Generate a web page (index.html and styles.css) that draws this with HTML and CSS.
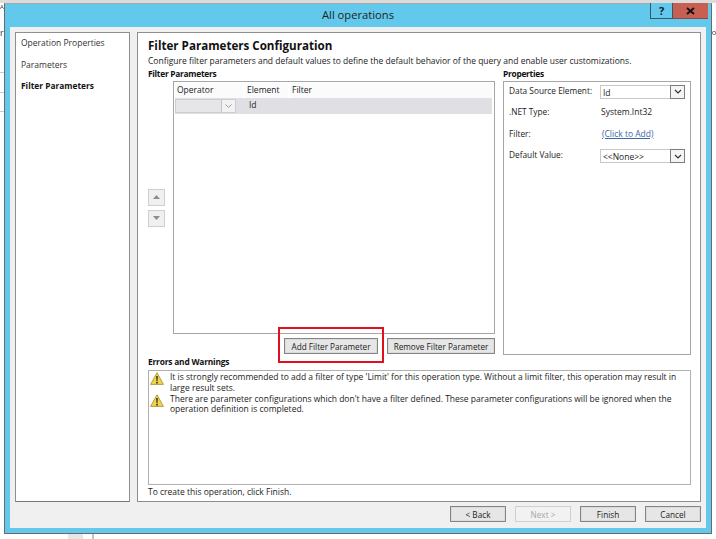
FILE: index.html
```html
<!DOCTYPE html>
<html lang="en">
<head>
<meta charset="utf-8">
<title>All operations</title>
<link rel="stylesheet" href="styles.css">
</head>
<body>
<div class="backdrop">
  <span class="bg-a">A</span><span class="bg-r">r</span><span class="bg-o">o</span>
  <span class="bg-line bg-l1"></span><span class="bg-line bg-l2"></span><span class="bg-line bg-l3"></span>
  <span class="bg-stub"></span>
</div>
<div class="window">
  <header class="titlebar">
    <span class="title">All operations</span>
    <div class="controls">
      <span class="ctl-help">?</span>
      <span class="ctl-close"><svg width="9" height="8" viewBox="0 0 9 8"><path d="M1 1l7 6M8 1L1 7" stroke="#111" stroke-width="1.9" fill="none"/></svg></span>
    </div>
  </header>
  <div class="client">
    <div class="panels">
      <nav class="nav">
        <div class="nav-item">Operation Properties</div>
        <div class="nav-item">Parameters</div>
        <div class="nav-item active">Filter Parameters</div>
      </nav>
      <main class="content">
        <h1 class="heading">Filter Parameters Configuration</h1>
        <p class="desc">Configure filter parameters and default values to define the default behavior of the query and enable user customizations.</p>
        <div class="columns">
          <section class="params">
            <div class="label">Filter Parameters</div>
            <div class="params-body">
              <div class="arrows">
                <span class="arrow"><svg width="7" height="4" viewBox="0 0 7 4"><path d="M3.5 0L7 4H0z" fill="#8e8e8e"/></svg></span>
                <span class="arrow"><svg width="7" height="4" viewBox="0 0 7 4"><path d="M0 0h7L3.5 4z" fill="#8e8e8e"/></svg></span>
              </div>
              <div class="grid">
                <div class="grid-head">
                  <span class="col-op">Operator</span><span class="col-el">Element</span><span class="col-fi">Filter</span>
                </div>
                <div class="grid-row">
                  <span class="mini-combo"><span class="mini-arrow"><svg width="7" height="4" viewBox="0 0 7 4"><path d="M.5.5l3 3 3-3" stroke="#9a9a9a" fill="none"/></svg></span></span>
                  <span class="row-id">Id</span>
                </div>
              </div>
            </div>
            <div class="param-buttons">
              <button class="btn btn-add">Add Filter Parameter</button>
              <button class="btn btn-remove">Remove Filter Parameter</button>
            </div>
          </section>
          <section class="props">
            <div class="label">Properties</div>
            <div class="props-box">
              <div class="prop">
                <span class="prop-name">Data Source Element:</span>
                <span class="combo"><span class="combo-text">Id</span><span class="combo-arrow"><svg width="8" height="5" viewBox="0 0 8 5"><path d="M1 1l3 3 3-3" stroke="#333" stroke-width="1.2" fill="none"/></svg></span></span>
              </div>
              <div class="prop">
                <span class="prop-name">.NET Type:</span>
                <span class="prop-value">System.Int32</span>
              </div>
              <div class="prop">
                <span class="prop-name">Filter:</span>
                <a class="prop-link" href="#">(Click to Add)</a>
              </div>
              <div class="prop">
                <span class="prop-name">Default Value:</span>
                <span class="combo"><span class="combo-text">&lt;&lt;None&gt;&gt;</span><span class="combo-arrow"><svg width="8" height="5" viewBox="0 0 8 5"><path d="M1 1l3 3 3-3" stroke="#333" stroke-width="1.2" fill="none"/></svg></span></span>
              </div>
            </div>
          </section>
        </div>
        <div class="label errors-label">Errors and Warnings</div>
        <div class="errors">
          <div class="error">
            <svg class="warn" width="14" height="13" viewBox="0 0 14 13"><path d="M7 .7L13.4 12.4H.6z" fill="#f3d544" stroke="#9a8a3a" stroke-width=".8"/><path d="M6.2 4h1.6l-.3 5h-1zM6.2 9.8h1.6v1.6H6.2z" fill="#2a2a2a"/></svg>
            <span>It is strongly recommended to add a filter of type 'Limit' for this operation type. Without a limit filter, this operation may result in large result sets.</span>
          </div>
          <div class="error">
            <svg class="warn" width="14" height="13" viewBox="0 0 14 13"><path d="M7 .7L13.4 12.4H.6z" fill="#f3d544" stroke="#9a8a3a" stroke-width=".8"/><path d="M6.2 4h1.6l-.3 5h-1zM6.2 9.8h1.6v1.6H6.2z" fill="#2a2a2a"/></svg>
            <span>There are parameter configurations which don't have a filter defined. These parameter configurations will be ignored when the operation definition is completed.</span>
          </div>
        </div>
        <p class="hint">To create this operation, click Finish.</p>
      </main>
    </div>
    <footer class="footer">
      <button class="btn btn-foot">&lt; Back</button>
      <button class="btn btn-foot btn-disabled">Next &gt;</button>
      <button class="btn btn-foot">Finish</button>
      <button class="btn btn-foot">Cancel</button>
    </footer>
  </div>
</div>
<div class="highlight"></div>
</body>
</html>
```
FILE: styles.css
```css
* { box-sizing: border-box; }
html, body { margin: 0; padding: 0; }
body {
  position: relative;
  width: 716px;
  height: 539px;
  overflow: hidden;
  background: #fff;
  padding: 3px 0 0 4px;
  font-family: "Open Sans", "Liberation Sans", sans-serif;
  font-size: 8.5px;
  line-height: 11px;
  color: #1c1c1c;
  filter: blur(.35px);
}
.backdrop { position: absolute; inset: 0; }
.backdrop > span { position: absolute; }
.bg-a { left: 0; top: 3px; font-size: 6px; line-height: 8px; color: #333; }
.bg-r { left: 0; top: 27px; font-size: 9px; color: #333; }
.bg-o { left: 712px; top: 27px; font-size: 7px; color: #333; }
.backdrop::before { content: ""; position: absolute; left: 0; top: 0; width: 716px; height: 3px; background: #dcdcdc; }
.bg-line { left: 0; width: 4px; height: 1px; background: #c8c8c8; }
.bg-l1 { top: 72px; }
.bg-l2 { top: 92px; }
.bg-l3 { top: 111px; }
.bg-stub { left: 68px; top: 534px; width: 26px; height: 5px; border-left: 15px solid #e6e6e6; border-right: 2px solid #c4c4c4; }

.window {
  position: relative;
  width: 708px;
  height: 531px;
  background: #63c9ec;
  border: 1px solid #6a6a6a;
  border-top-color: #a8a8a8;
}
.titlebar {
  position: relative;
  height: 23px;
  display: flex;
  align-items: center;
  justify-content: center;
  padding-bottom: 2px;
}
.title { font-size: 11.2px; color: #222; }
.controls { position: absolute; top: -1px; right: 3px; display: flex; }
.ctl-help, .ctl-close { display: flex; align-items: center; justify-content: center; height: 16px; font-weight: 700; }
.ctl-help { width: 23px; font-size: 11px; color: #123; background: #63c9ec; border: 1px solid #36596a; border-top: 0; }
.ctl-close { width: 35px; background: #c75f52; border-bottom: 1px solid #8a4a42; }

.client {
  margin: 0 5px;
  height: 501px;
  background: #f0f0f0;
  padding: 5px 5px 0;
  display: flex;
  flex-direction: column;
}
.panels { display: flex; gap: 7px; height: 470px; }
.nav {
  width: 115px;
  background: #fff;
  border: 1px solid #8f8f8f;
  border-bottom-color: #777;
  padding: 4px 5px 0;
}
.nav-item { height: 21.5px; line-height: 11px; color: #333; }
.nav-item.active { font-weight: 700; color: #111; font-size: 8.35px; }
.content {
  flex: 1;
  background: #fff;
  border: 1px solid #8f8f8f;
  padding: 5px 9px 0 10px;
  display: flex;
  flex-direction: column;
}
.heading { margin: 0; font-size: 11.6px; line-height: 16px; font-weight: 700; color: #111; }
.desc { margin: 1px 0 0; height: 12px; line-height: 12px; white-space: nowrap; }
.label { font-weight: 700; line-height: 12px; height: 13px; color: #111; font-size: 8.4px; letter-spacing: -.28px; }
.columns { display: flex; gap: 8px; margin-top: 1px; }
.params { width: 347px; }
.params-body { display: flex; height: 253px; }
.arrows { width: 25px; display: flex; flex-direction: column; justify-content: center; gap: 4px; }
.arrow {
  width: 17px; height: 17px;
  display: flex; align-items: center; justify-content: center;
  background: #f0f0f0; border: 1px solid #cfcfcf;
}
.grid { flex: 1; border: 1px solid #a6a6a6; padding: 1px 0 0 1px; background: #fff; }
.grid-head { display: flex; height: 15px; align-items: center; background: #fbfbfb; }
.grid-head span { height: 15px; line-height: 13px; padding-left: 2px; border-right: 2px solid #fff; }
.col-op { width: 70px; }
.col-el { width: 45px; }
.col-fi { flex: 1; }
.grid-row { display: flex; align-items: center; height: 16px; background: #e0e0e4; margin-right: 2px; }
.mini-combo {
  width: 61px; height: 14px; background: #e6e6e8; border: 1px solid #cdcdcd;
  display: flex; justify-content: flex-end;
}
.mini-arrow { width: 14px; background: #f2f2f2; border-left: 1px solid #c4c4c4; display: flex; align-items: center; justify-content: center; }
.row-id { margin-left: 13px; margin-top: -4px; }
.param-buttons { display: flex; justify-content: flex-end; gap: 9px; margin-top: 4px; }
.btn {
  font: inherit;
  font-size: 8.2px;
  color: #1c1c1c;
  height: 16px;
  padding: 0;
  line-height: 13px;
  background: #e6e6e6;
  border: 1px solid #858585;
  border-radius: 0;
  box-shadow: inset 0 0 0 1px #dadada;
}
.btn-add { width: 94px; }
.btn-remove { width: 108px; }
.props { width: 188px; }
.props-box { height: 274px; border: 1px solid #a6a6a6; padding: 0 5px; }
.prop { display: flex; align-items: center; height: 21.5px; }
.prop:first-child { margin-top: -1px; }
.prop-name { width: 91px; flex: none; color: #222; font-size: 8.3px; margin-top: -3px; }
.prop-value, .prop-link { margin-top: -3px; }
.combo {
  width: 86px; height: 14px; display: flex; background: #fff;
  border: 1px solid #c8c8c8; justify-content: space-between; align-items: stretch;
}
.combo-text { padding-left: 2px; line-height: 13px; }
.combo-arrow { width: 15px; margin: -1px; border: 1px solid #7c7c7c; display: flex; align-items: center; justify-content: center; background: #f4f4f4; }
.prop-link { color: #3a68a8; text-decoration: underline; padding-left: 2px; }
.prop-value { padding-left: 1px; }
.errors-label { margin-top: 1px; line-height: 12px; letter-spacing: -.2px; }
.errors {
  width: 543px; height: 115px; margin-top: 1px; border: 1px solid #b0b0b0;
  padding: 0 4px 0 1px;
}
.error { display: flex; gap: 6px; }
.error + .error { margin-top: -1px; }
.warn { flex: none; margin-top: 1px; }
.error span { display: block; padding-right: 2px; line-height: 10.8px; margin-top: 1px; }
.hint { margin: 1px 0 0; line-height: 11px; }
.footer { display: flex; justify-content: flex-end; margin-top: 4px; gap: 9px; }
.btn-foot { width: 56px; height: 16px; }
.btn-disabled { color: #a5a5a5; background: #f2f2f2; border-color: #cfcfcf; box-shadow: none; }

.highlight {
  position: absolute;
  left: 278px; top: 327px;
  width: 106px; height: 36px;
  border: 2px solid #e0101e;
}
```
